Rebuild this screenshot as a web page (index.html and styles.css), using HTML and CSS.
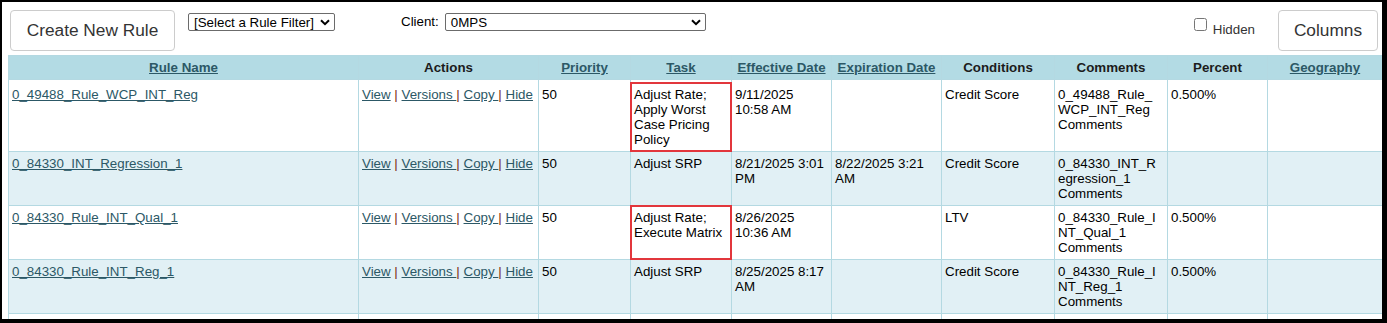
FILE: index.html
```html
<!DOCTYPE html>
<html lang="en">
<head>
<meta charset="utf-8">
<title>Rules</title>
<link rel="stylesheet" href="styles.css">
</head>
<body>
<div class="frame">
  <div class="toolbar">
    <button class="btn btn-create" type="button">Create New Rule</button>
    <div class="select select-filter">
      <span class="select-text">[Select a Rule Filter]</span>
      <svg class="chev" viewBox="0 0 10 7" width="10" height="7"><path d="M1 1.2 L5 5.2 L9 1.2" fill="none" stroke="#000" stroke-width="2"/></svg>
    </div>
    <div class="client">
      <span class="client-label">Client:</span>
      <div class="select select-client">
        <span class="select-text">0MPS</span>
        <svg class="chev" viewBox="0 0 10 7" width="10" height="7"><path d="M1 1.2 L5 5.2 L9 1.2" fill="none" stroke="#000" stroke-width="2"/></svg>
      </div>
    </div>
    <div class="spacer"></div>
    <label class="hidden-toggle"><input type="checkbox" class="cb"><span>Hidden</span></label>
    <button class="btn btn-columns" type="button">Columns</button>
  </div>

  <table class="grid">
    <colgroup>
      <col class="c-name"><col class="c-actions"><col class="c-priority"><col class="c-task"><col class="c-eff"><col class="c-exp"><col class="c-cond"><col class="c-comments"><col class="c-percent"><col class="c-geo">
    </colgroup>
    <thead>
      <tr>
        <th><a href="#">Rule Name</a></th>
        <th>Actions</th>
        <th><a href="#">Priority</a></th>
        <th><a href="#">Task</a></th>
        <th><a href="#">Effective Date</a></th>
        <th><a href="#">Expiration Date</a></th>
        <th>Conditions</th>
        <th>Comments</th>
        <th>Percent</th>
        <th><a href="#">Geography</a></th>
      </tr>
    </thead>
    <tbody>
      <tr class="row-first">
        <td><a href="#">0_49488_Rule_WCP_INT_Reg</a></td>
        <td class="actions"><a href="#">View</a><span class="sep"> | </span><a href="#">Versions </a><span class="sep">| </span><a href="#">Copy </a><span class="sep">| </span><a href="#">Hide</a></td>
        <td>50</td>
        <td class="flag flag-inset">Adjust Rate; Apply Worst Case Pricing Policy</td>
        <td>9/11/2025 10:58 AM</td>
        <td></td>
        <td>Credit Score</td>
        <td class="wrap">0_49488_Rule_WCP_INT_Reg Comments</td>
        <td>0.500%</td>
        <td></td>
      </tr>
      <tr class="alt">
        <td><a href="#">0_84330_INT_Regression_1</a></td>
        <td class="actions"><a href="#">View</a><span class="sep"> | </span><a href="#">Versions </a><span class="sep">| </span><a href="#">Copy </a><span class="sep">| </span><a href="#">Hide</a></td>
        <td>50</td>
        <td>Adjust SRP</td>
        <td>8/21/2025 3:01 PM</td>
        <td>8/22/2025 3:21 AM</td>
        <td>Credit Score</td>
        <td class="wrap">0_84330_INT_Regression_1 Comments</td>
        <td></td>
        <td></td>
      </tr>
      <tr>
        <td><a href="#">0_84330_Rule_INT_Qual_1</a></td>
        <td class="actions"><a href="#">View</a><span class="sep"> | </span><a href="#">Versions </a><span class="sep">| </span><a href="#">Copy </a><span class="sep">| </span><a href="#">Hide</a></td>
        <td>50</td>
        <td class="flag">Adjust Rate; Execute Matrix</td>
        <td>8/26/2025 10:36 AM</td>
        <td></td>
        <td>LTV</td>
        <td class="wrap">0_84330_Rule_INT_Qual_1 Comments</td>
        <td>0.500%</td>
        <td></td>
      </tr>
      <tr class="alt">
        <td><a href="#">0_84330_Rule_INT_Reg_1</a></td>
        <td class="actions"><a href="#">View</a><span class="sep"> | </span><a href="#">Versions </a><span class="sep">| </span><a href="#">Copy </a><span class="sep">| </span><a href="#">Hide</a></td>
        <td>50</td>
        <td>Adjust SRP</td>
        <td>8/25/2025 8:17 AM</td>
        <td></td>
        <td>Credit Score</td>
        <td class="wrap">0_84330_Rule_INT_Reg_1 Comments</td>
        <td>0.500%</td>
        <td></td>
      </tr>
      <tr>
        <td><a href="#">0_87694_Rule_Mix_INT_1</a></td>
        <td class="actions"><a href="#">View</a><span class="sep"> | </span><a href="#">Versions </a><span class="sep">| </span><a href="#">Copy </a><span class="sep">| </span><a href="#">Hide</a></td>
        <td>50</td>
        <td>Adjust Rate; Execute Matrix</td>
        <td>8/25/2025 8:33 AM</td>
        <td></td>
        <td>Credit Score</td>
        <td class="wrap">0_87694_Rule_Mix_INT_1 Comments</td>
        <td>0.500%</td>
        <td></td>
      </tr>
    </tbody>
  </table>
</div>
</body>
</html>
```

FILE: styles.css
```css
html {
  background: #000;
}
body {
  margin: 0;
  font-family: "Liberation Sans", Arial, sans-serif;
  font-size: 13.33px;
  color: #000;
}
.frame {
  margin: 2px 5px 4px 2px;
  height: 317px;
  background: #fff;
  overflow: hidden;
  padding: 8px 0 0 6px;
  box-sizing: border-box;
}
.toolbar {
  display: flex;
  align-items: flex-start;
  height: 41px;
  margin: 0 0 4px 2px;
}
.btn {
  height: 41px;
  background: #fff;
  border: 1px solid #cccccc;
  border-radius: 4px;
  font-family: "Liberation Sans", Arial, sans-serif;
  font-size: 17.3px;
  color: #333;
  padding: 0;
}
.btn-create {
  width: 165px;
}
.btn-columns {
  width: 100px;
  margin-right: 4px;
}
.select {
  display: flex;
  align-items: center;
  justify-content: space-between;
  box-sizing: border-box;
  height: 18px;
  margin-top: 3px;
  border: 1px solid #6b6b6b;
  border-radius: 2px;
  padding: 0 4px 0 5px;
  background: #fff;
  font-size: 13.33px;
  color: #000;
}
.select-filter {
  width: 147px;
  margin-left: 13px;
}
.select-client {
  width: 261px;
  margin-left: 6px;
}
.chev {
  display: block;
}
.client {
  display: flex;
  align-items: flex-start;
  margin-left: 66px;
}
.client-label {
  margin-top: 4px;
  line-height: 15px;
}
.spacer {
  flex: 1;
}
.hidden-toggle {
  display: flex;
  align-items: flex-start;
  margin-top: 8px;
  margin-right: 23px;
  color: #333;
  line-height: 15px;
}
.cb {
  width: 13px;
  height: 13px;
  margin: 0 6px 0 0;
}
.hidden-toggle span {
  padding-top: 4px;
}

.grid {
  width: 100%;
  table-layout: fixed;
  border-collapse: collapse;
  border: 1px solid #b4d9e2;
}
.c-name { width: 350px; }
.c-actions { width: 180px; }
.c-priority { width: 92px; }
.c-task { width: 101px; }
.c-eff { width: 100px; }
.c-exp { width: 110px; }
.c-cond { width: 113px; }
.c-comments { width: 113px; }
.c-percent { width: 100px; }
.c-geo { width: 115px; }

.grid th,
.grid td {
  border: 1px solid #b4d9e2;
  padding: 4px 6px 4px 3px;
  line-height: 15px;
  vertical-align: top;
  text-align: left;
  font-size: 13.33px;
}
.grid th {
  background: #b3dbe4;
  text-align: center;
  font-weight: bold;
  color: #1c1c1c;
  padding: 4px 3px 4px 3px;
}
.grid a {
  color: #2c5866;
  text-decoration: underline;
}
.grid tr.alt td {
  background: #e1f0f5;
}
.grid tr.row-first td {
  padding-top: 7px;
}
.actions {
  white-space: nowrap;
}
.sep {
  color: #7a2a12;
}
.wrap {
  overflow-wrap: break-word;
}
.flag {
  position: relative;
}
.flag::after {
  content: "";
  position: absolute;
  top: -1px;
  left: -1px;
  right: -1px;
  bottom: -1px;
  border: 2px solid #e2363c;
  pointer-events: none;
}
.flag-inset::after {
  top: 2px;
}
```
